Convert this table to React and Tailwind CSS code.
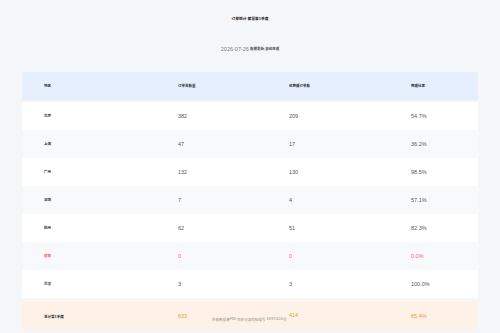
import React from 'react';

const rows = [
  { name: '北京', total: 382, done: 209, rate: '54.7%' },
  { name: '上海', total: 47, done: 17, rate: '36.2%' },
  { name: '广州', total: 132, done: 130, rate: '98.5%' },
  { name: '深圳', total: 7, done: 4, rate: '57.1%' },
  { name: '杭州', total: 62, done: 51, rate: '82.3%' },
  { name: '成都', total: 0, done: 0, rate: '0.0%', warn: true },
  { name: '武汉', total: 3, done: 3, rate: '100.0%' },
];

const cjk = { fontFamily: '"Noto Sans CJK SC", "Liberation Sans", sans-serif' };

const Zh = ({ children, className = '' }) => (
  <span className={`text-[3.5px] font-bold ${className}`} style={cjk}>
    {children}
  </span>
);

const App = () => {
  return (
    <div
      className="w-[500px] h-[333px] overflow-hidden bg-[#f5f6f8] px-[22px] text-[5.5px] text-[#303133]"
      style={{ fontFamily: '"Liberation Sans", "Noto Sans CJK SC", sans-serif' }}
    >
      {/* 标题 */}
      <div className="h-[37px] flex items-center justify-center font-bold text-[#1f2022]">
        <Zh className="text-[3.7px]">订单统计-截至第</Zh>
        <span className="text-[4px]">1</span>
        <Zh className="text-[3.7px]">季度</Zh>
      </div>
      <div className="h-[24px] mb-[11px] flex items-center justify-center text-[#7a7c80]">
        <span>2026-07-26</span>
        <Zh className="ml-[1px] text-[#4a4c50]">数据更新-自动生成</Zh>
      </div>

      {/* 表头 */}
      <div className="h-[28px] grid grid-cols-[134px_111px_122px_1fr] items-center pl-[22px] bg-[#e6effd] text-[#26282b]">
        <Zh>地区</Zh>
        <Zh>订单总数量</Zh>
        <Zh>已完成订单数</Zh>
        <Zh>完成比率</Zh>
      </div>

      {/* 数据行 */}
      <div className="mt-[2px]">
        {rows.map((r, i) => (
          <div
            key={r.name}
            className={`h-[28px] grid grid-cols-[134px_111px_122px_1fr] items-center pl-[22px] ${
              i % 2 === 0 ? 'bg-white' : 'bg-[#f8f9fb]'
            } ${r.warn ? 'text-[#f56c6c]' : 'text-[#55575b]'}`}
          >
            <Zh className={r.warn ? '' : 'text-[#2a2c30]'}>{r.name}</Zh>
            <span>{r.total}</span>
            <span>{r.done}</span>
            <span>{r.rate}</span>
          </div>
        ))}
      </div>

      {/* 合计 */}
      <div className="relative mt-[4px] h-[28px] grid grid-cols-[134px_111px_122px_1fr] items-center pl-[22px] bg-[#fef1e7] text-[#f7953d]">
        <span className="text-[#26282b] font-bold">
          <Zh>总计第</Zh>
          <span className="text-[4px]">1</span>
          <Zh>季度</Zh>
        </span>
        <span>633</span>
        <span className="-mt-[2px]">414</span>
        <span>65.4%</span>
        <div className="absolute left-[190px] top-[14px] flex items-center text-[4.3px] text-[#909399] whitespace-nowrap">
          <Zh className="font-normal">外部数据源</Zh>
          <span>FBI</span>
          <Zh className="ml-[1px] font-normal">同步记录校验编号</Zh>
          <span className="ml-[1px]">1697424</span>
          <Zh className="font-normal">号</Zh>
        </div>
      </div>
    </div>
  );
};

export default App;
